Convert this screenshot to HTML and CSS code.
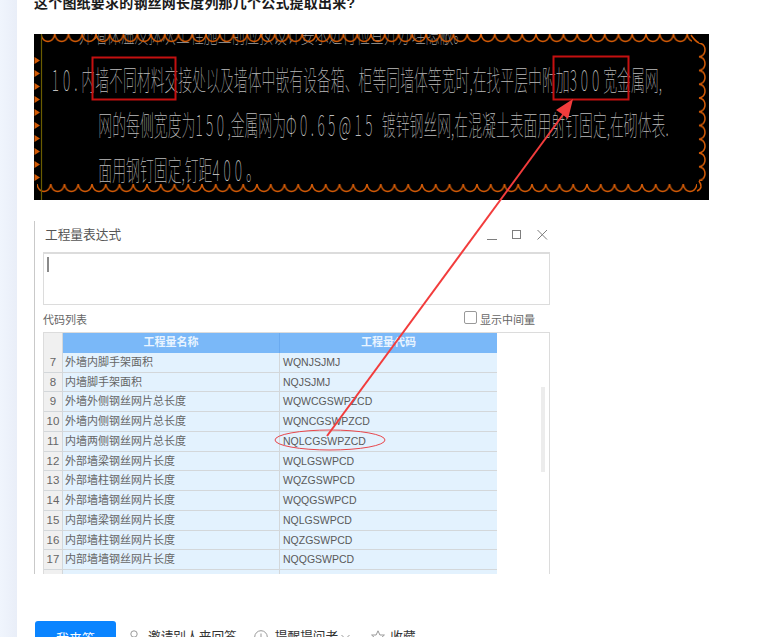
FILE: index.html
```html
<!DOCTYPE html>
<html lang="zh">
<head>
<meta charset="utf-8">
<title>钢丝网长度</title>
<link rel="stylesheet" href="styles.css">
</head>
<body>
<div class="page">
  <aside class="rail"></aside>
  <main class="main">
    <h1 class="question">这个图纸要求的钢丝网长度列那几个公式提取出来?</h1>

    <div class="cad">
      <div class="cad-lines">
        <p class="cad-clip">外墙保温及抹灰工程施工前应按设计要求进行检查并办理隐蔽。</p>
        <p class="cad-line cad-first"><span class="dg">10.</span>内墙不同材料交接处以及墙体中嵌有设备箱、柜等同墙体等宽时,在找平层中附加<span class="dg">300</span>宽金属网,</p>
        <p class="cad-line cad-indent">网的每侧宽度为<span class="dn">150</span>,金属网为<span class="dn dn-long">Φ0.65@15</span>镀锌钢丝网,在混凝土表面用射钉固定,在砌体表.</p>
        <p class="cad-line cad-indent">面用钢钉固定,钉距<span class="dg">400</span>。</p>
      </div>
      <svg class="cad-art" width="675" height="166" viewBox="0 0 675 166">
        <defs>
          <pattern id="scT" x="7" y="0" width="13.75" height="10" patternUnits="userSpaceOnUse">
            <path d="M0 0 Q1 7 6.9 7.5 Q12.7 7 13.75 0" class="sc"/>
          </pattern>
          <pattern id="scB" x="3" y="150" width="13.75" height="10" patternUnits="userSpaceOnUse">
            <path d="M0 0 Q1 7 6.9 7.5 Q12.7 7 13.75 0" class="sc"/>
          </pattern>
          <pattern id="scR" x="664" y="9" width="10" height="13.75" patternUnits="userSpaceOnUse">
            <path d="M1 0 Q7 1 7 6.9 Q7 12.7 1 13.75" class="sc"/>
          </pattern>
          <pattern id="scL" x="0" y="20" width="7" height="13" patternUnits="userSpaceOnUse">
            <path d="M0.5 3 L6 6.5 L0.5 10 Z" class="sc-fill"/>
          </pattern>
        </defs>
        <rect x="7" y="0" width="651" height="10" fill="url(#scT)"/>
        <rect x="3" y="150" width="660" height="10" fill="url(#scB)"/>
        <rect x="664" y="9" width="10" height="138" fill="url(#scR)"/>
        <rect x="0" y="20" width="7" height="130" fill="url(#scL)"/>
        <path class="sc" d="M657 1 Q661 7 665 9 M663 157 Q670 154 665 147"/>
        <line class="cad-olive" x1="7.5" y1="0" x2="7.5" y2="166"/>
      </svg>
    </div>

    <section class="dialog">
      <header class="dialog-head">
        <span class="dialog-title">工程量表达式</span>
        <span class="win-icons">
          <svg width="12" height="12" viewBox="0 0 12 12"><path class="win" d="M1 10.5H11"/></svg>
          <svg width="12" height="12" viewBox="0 0 12 12"><rect class="win" x="1.5" y="1.5" width="8" height="8"/></svg>
          <svg width="12" height="12" viewBox="0 0 12 12"><path class="win" d="M1.5 1L11 10.5M11 1L1.5 10.5"/></svg>
        </span>
      </header>
      <div class="expr"><span class="caret"></span></div>
      <div class="list-bar">
        <span>代码列表</span>
        <label class="show-mid"><span class="check"></span>显示中间量</label>
      </div>
      <div class="grid-box">
        <div class="grid">
          <div class="row head"><span class="no"></span><span class="nm">工程量名称</span><span class="cd">工程量代码</span></div>
          <div class="row"><span class="no">7</span><span class="nm">外墙内脚手架面积</span><span class="cd">WQNJSJMJ</span></div>
          <div class="row"><span class="no">8</span><span class="nm">内墙脚手架面积</span><span class="cd">NQJSJMJ</span></div>
          <div class="row"><span class="no">9</span><span class="nm">外墙外侧钢丝网片总长度</span><span class="cd">WQWCGSWPZCD</span></div>
          <div class="row"><span class="no">10</span><span class="nm">外墙内侧钢丝网片总长度</span><span class="cd">WQNCGSWPZCD</span></div>
          <div class="row"><span class="no">11</span><span class="nm">内墙两侧钢丝网片总长度</span><span class="cd">NQLCGSWPZCD</span></div>
          <div class="row"><span class="no">12</span><span class="nm">外部墙梁钢丝网片长度</span><span class="cd">WQLGSWPCD</span></div>
          <div class="row"><span class="no">13</span><span class="nm">外部墙柱钢丝网片长度</span><span class="cd">WQZGSWPCD</span></div>
          <div class="row"><span class="no">14</span><span class="nm">外部墙墙钢丝网片长度</span><span class="cd">WQQGSWPCD</span></div>
          <div class="row"><span class="no">15</span><span class="nm">内部墙梁钢丝网片长度</span><span class="cd">NQLGSWPCD</span></div>
          <div class="row"><span class="no">16</span><span class="nm">内部墙柱钢丝网片长度</span><span class="cd">NQZGSWPCD</span></div>
          <div class="row"><span class="no">17</span><span class="nm">内部墙墙钢丝网片长度</span><span class="cd">NQQGSWPCD</span></div>
          <div class="row"><span class="no"></span><span class="nm"></span><span class="cd"></span></div>
        </div>
        <div class="scroll"></div>
      </div>
    </section>

    <div class="actions">
      <button class="answer">我来答</button>
      <span class="act act-invite">
        <svg class="ic-person" width="12" height="14" viewBox="0 0 12 14"><circle class="ai" cx="6" cy="4" r="3.2"/><path class="ai" d="M1 13.5Q6 7 11 13.5"/></svg>
        <span class="act-label">邀请别人来回答</span>
      </span>
      <span class="act act-remind">
        <svg class="ic-info" width="14" height="14" viewBox="0 0 14 14"><circle class="ai" cx="7" cy="7" r="6.3"/><path class="ai" d="M7 3.5V8M7 9.5V10.8"/></svg>
        <span class="act-label">提醒提问者</span>
        <svg class="ic-chev" width="9" height="6" viewBox="0 0 9 6"><path class="ai" d="M0.5 1L4.5 5L8.5 1"/></svg>
      </span>
      <span class="act act-fav">
        <svg class="ic-star" width="14" height="14" viewBox="0 0 14 14"><path class="ai" d="M7 .8L8.9 5H13.4L9.9 8.1L11 12.9L7 10.4L3 12.9L4.1 8.1L.6 5H5.1Z"/></svg>
        <span class="act-label">收藏</span>
      </span>
    </div>

    <svg class="marks" width="752" height="637" viewBox="0 0 752 637">
      <rect class="box" x="75.5" y="57.5" width="83" height="42"/>
      <rect class="box" x="536.5" y="56.5" width="75" height="43"/>
      <path class="arrow" d="M310 436L548 112"/>
      <path class="arrowhead" d="M556 99L551 119L545 114L539 110Z"/>
      <ellipse class="ring" cx="313" cy="440" rx="55" ry="10"/>
    </svg>
  </main>
</div>
</body>
</html>
```

FILE: styles.css
```css
* { box-sizing: border-box; }
html, body { margin: 0; height: 100%; overflow: hidden; background: #fff; }
body { font-family: "Liberation Sans", "Noto Sans CJK SC", sans-serif; color: #333; }
p, h1 { margin: 0; }

.page { display: flex; height: 637px; overflow: hidden; }
.rail { flex: 0 0 17px; background: linear-gradient(90deg, #f0f5fd, #e9eef8); }
.main { position: relative; flex: 1; padding-left: 17px; min-width: 0; overflow: hidden; }

.question { font-size: 14px; letter-spacing: .2px; line-height: 20px; font-weight: 700; color: #1b1b1b; margin-top: -7px; height: 41px; }

.cad { position: relative; width: 675px; height: 166px; background: #000; overflow: hidden; }
.cad-lines { font-family: "Noto Sans CJK SC", sans-serif; font-weight: 100; color: #bcbcbc; font-size: 28px; white-space: nowrap; }
.cad-lines p { height: 45px; line-height: 45px; transform: scaleX(.495); transform-origin: left center; }
.cad-clip { margin-top: -25px; padding-left: 91px; color: #a0a0a0; }
.cad-first { padding-left: 36px; margin-top: 3px; }
.cad-line + .cad-line { padding-left: 130px; }
.dg { letter-spacing: 8px; }
.dn { letter-spacing: 7px; }
.dn-long { margin-right: 12px; }
.cad-art { position: absolute; inset: 0; }
.sc { fill: none; stroke: #d25a06; stroke-width: 1.5; }
.sc-fill { fill: #d25a06; }
.cad-olive { stroke: #6a5c00; stroke-width: 1.2; }

.dialog { width: 516px; height: 353px; margin-top: 21px; border-left: 1px solid #c9c9c9; padding-left: 8px; overflow: hidden; color: #555; }
.dialog-head { display: flex; justify-content: space-between; align-items: flex-start; height: 31px; padding: 7px 2px 0 2px; }
.dialog-title { font-size: 12.7px; line-height: 14px; color: #555; }
.win-icons { display: flex; gap: 13px; padding-top: 1px; }
.win { fill: none; stroke: #7e7e7e; stroke-width: 1; }
.expr { height: 53px; border: 1px solid #dcdcdc; border-top-width: 2px; padding: 3px 3px; background: #fff; }
.caret { display: block; width: 2px; height: 15px; background: #8a8a8a; }
.list-bar { display: flex; justify-content: space-between; align-items: center; height: 27px; font-size: 11px; color: #666; }
.show-mid { display: flex; align-items: center; gap: 3px; padding-right: 15px; font-size: 11px; }
.check { width: 13px; height: 13px; margin-top: -2px; border: 1px solid #999; border-radius: 2px; background: #fff; }

.grid-box { position: relative; height: 242px; border: 1px solid #dcdcdc; border-bottom: 0; }
.grid { width: 453px; }
.row { display: grid; grid-template-columns: 19px 217px 217px; height: 19.75px; background: #e3f2fe; font-size: 11px; line-height: 18px; border-bottom: 1px solid #d3d7da; }
.no { background: #f0f0f0; border-right: 1px solid #d3d7da; text-align: center; font-size: 11.5px; color: #666; }
.nm { padding-left: 2px; border-right: 1px solid #d3d7da; color: #666; }
.cd { padding-left: 3px; color: #5a5a5a; font-size: 10.5px; }
.head { background: #7ab8f8; border-bottom: 0; color: #e9f4ff; font-weight: 700; }
.head .nm, .head .cd { padding: 0; text-align: center; color: #e9f4ff; font-size: 11px; }
.head .nm { border-right-color: #6aaaf0; }
.scroll { position: absolute; left: 497px; top: 54px; width: 4px; height: 85px; background: #ececec; }

.actions { display: flex; align-items: flex-start; margin-top: 47px; height: 40px; font-size: 13px; color: #333; padding-left: 1px; }
.answer { width: 81px; height: 32px; border: 0; border-radius: 3px; background: #0a84ff; color: #fff; font: 13px "Liberation Sans", "Noto Sans CJK SC", sans-serif; }
.act { display: inline-flex; align-items: center; height: 32px; white-space: nowrap; }
.act-invite { margin-left: 12px; }
.act-remind { margin-left: 17px; }
.act-fav { margin-left: 21px; }
.act-label { font-size: 12.7px; line-height: 32px; color: #333; }
.ic-person { margin-right: 8px; }
.ic-info { margin-right: 7px; }
.ic-chev { margin-left: 3px; }
.ic-star { margin-right: 5px; }
.ai { fill: none; stroke: #999; stroke-width: 1; }

.marks { position: absolute; left: 0; top: 0; pointer-events: none; }
.box { fill: none; stroke: #c41010; stroke-width: 2; }
.arrow { fill: none; stroke: #f23c3c; stroke-width: 2; }
.arrowhead { fill: #f23c3c; }
.ring { fill: none; stroke: #e8474c; stroke-width: 1; }
```
